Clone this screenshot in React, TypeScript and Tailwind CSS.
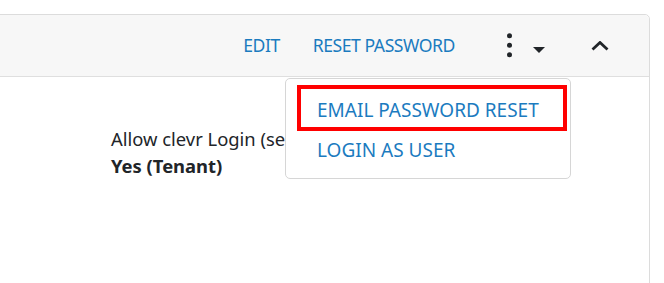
import React from "react";

export default function App() {
  return (
    <div
      className="relative w-[664px] h-[283px] overflow-hidden bg-white pt-[14px] pr-[14px]"
      style={{ fontFamily: '"Noto Sans", "Open Sans", sans-serif' }}
    >
      <div className="-ml-[6px] h-[300px] rounded-[5px] border border-[#dcdcdc]">
        <div className="flex h-[62px] items-center justify-end rounded-t-[5px] border-b border-[#dfdfdf] bg-[#f7f7f7] pr-[40px] text-[17.6px] tracking-[-0.45px] text-[#1b7bbf]">
          <span className="leading-none">EDIT</span>
          <span className="ml-[33px] leading-none">RESET PASSWORD</span>
          <div className="ml-[52px] flex items-center">
            <svg width="5" height="25" viewBox="0 0 5 25" className="block">
              <circle cx="2.5" cy="2.8" r="2.5" fill="#212529" />
              <circle cx="2.5" cy="12.3" r="2.5" fill="#212529" />
              <circle cx="2.5" cy="21.8" r="2.5" fill="#212529" />
            </svg>
            <svg width="12" height="6" viewBox="0 0 12 6" className="ml-[21px] mt-[9px] block">
              <path d="M0 0 H12 L6 6 Z" fill="#212529" />
            </svg>
          </div>
          <svg width="18" height="10" viewBox="0 0 18 10" className="ml-[46px] block">
            <path d="M1.5 8.5 L9 1.5 L16.5 8.5" fill="none" stroke="#212529" strokeWidth="2.8" />
          </svg>
        </div>
        <div className="pl-[116px] pt-[48px] text-[18.4px] leading-[27px] text-[#212529]">
          <div>Allow clevr Login (self service)</div>
          <div className="font-bold">Yes (Tenant)</div>
        </div>
      </div>

      <div className="absolute left-[285px] top-[78px] h-[101px] w-[286px] rounded-[5px] border border-[#d6d6d6] bg-white pt-[17px] text-[19px] text-[#1b7bbf]">
        <div className="pointer-events-none absolute left-[11px] top-[6px] h-[46px] w-[270px] border-[4px] border-[#ff0000]" />
        <div className="pl-[31px] leading-[28px]">EMAIL PASSWORD RESET</div>
        <div className="pl-[31px] pt-[12px] leading-[28px]">LOGIN AS USER</div>
      </div>
    </div>
  );
}
